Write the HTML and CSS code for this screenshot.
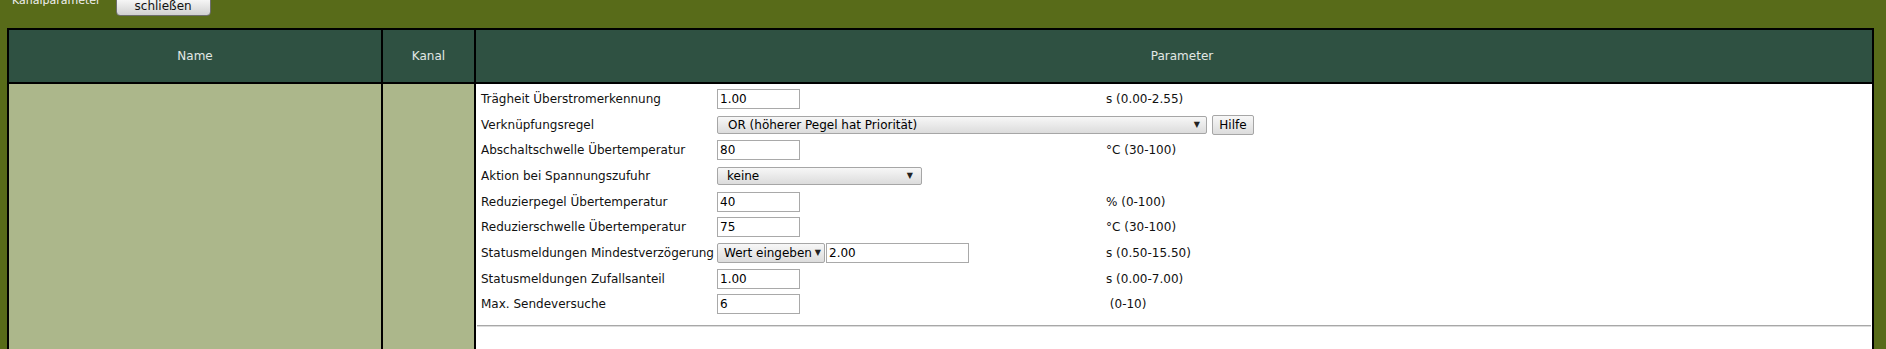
FILE: index.html
```html
<!DOCTYPE html>
<html lang="de">
<head>
<meta charset="utf-8">
<title>Kanalparameter</title>
<link rel="stylesheet" href="styles.css">
</head>
<body>
<div class="topbar">
  <span class="title">Kanalparameter</span>
  <button class="close-btn" type="button">schließen</button>
</div>
<table class="channel-table">
  <thead>
    <tr>
      <th class="col-name">Name</th>
      <th class="col-kanal">Kanal</th>
      <th class="col-param">Parameter</th>
    </tr>
  </thead>
  <tbody>
    <tr>
      <td class="cell-name"></td>
      <td class="cell-kanal"></td>
      <td class="cell-param">
        <div class="params">
          <div class="label">Trägheit Überstromerkennung</div>
          <div class="value"><input class="field" type="text" value="1.00"></div>
          <div class="unit">s (0.00-2.55)</div>

          <div class="label">Verknüpfungsregel</div>
          <div class="value wide">
            <div class="select select-rule"><span>OR (höherer Pegel hat Priorität)</span><span class="arrow">▼</span></div>
            <button class="help-btn" type="button">Hilfe</button>
          </div>

          <div class="label">Abschaltschwelle Übertemperatur</div>
          <div class="value"><input class="field" type="text" value="80"></div>
          <div class="unit">°C (30-100)</div>

          <div class="label">Aktion bei Spannungszufuhr</div>
          <div class="value wide">
            <div class="select select-action"><span>keine</span><span class="arrow">▼</span></div>
          </div>

          <div class="label">Reduzierpegel Übertemperatur</div>
          <div class="value"><input class="field" type="text" value="40"></div>
          <div class="unit">% (0-100)</div>

          <div class="label">Reduzierschwelle Übertemperatur</div>
          <div class="value"><input class="field" type="text" value="75"></div>
          <div class="unit">°C (30-100)</div>

          <div class="label">Statusmeldungen Mindestverzögerung</div>
          <div class="value">
            <div class="select select-mode"><span>Wert eingeben</span><span class="arrow">▼</span></div>
            <input class="field field-long" type="text" value="2.00">
          </div>
          <div class="unit">s (0.50-15.50)</div>

          <div class="label">Statusmeldungen Zufallsanteil</div>
          <div class="value"><input class="field" type="text" value="1.00"></div>
          <div class="unit">s (0.00-7.00)</div>

          <div class="label">Max. Sendeversuche</div>
          <div class="value"><input class="field" type="text" value="6"></div>
          <div class="unit">&nbsp;(0-10)</div>
        </div>
        <hr class="sep">
      </td>
    </tr>
  </tbody>
</table>
</body>
</html>
```
FILE: styles.css
```css
body {
  margin: 0;
  background: #586b19;
  font-family: "DejaVu Sans", Verdana, sans-serif;
  font-size: 12px;
  color: #111;
}

.topbar {
  display: flex;
  align-items: flex-start;
  height: 28px;
  padding-left: 12px;
}

.title {
  margin-top: -6px;
  font-size: 11px;
  line-height: 13px;
  color: #f0f0f0;
}

.close-btn {
  box-sizing: border-box;
  margin-left: 15px;
  margin-top: -4px;
  width: 95px;
  height: 20px;
  padding: 0;
  border: 1px solid #6e6e6e;
  border-radius: 4px;
  background: linear-gradient(#fdfdfd, #d0d0d0);
  font: 12px "DejaVu Sans", Verdana, sans-serif;
  color: #111;
}

.channel-table {
  box-sizing: border-box;
  margin-left: 7px;
  width: 1867px;
  border: 2px solid #000;
  border-spacing: 0;
  table-layout: fixed;
}

.channel-table th {
  height: 52px;
  padding: 0;
  background: #2f5142;
  color: #e2e8e5;
  font-weight: normal;
  font-size: 12px;
  border-bottom: 2px solid #000;
  vertical-align: middle;
}

.col-name {
  width: 372px;
  border-right: 2px solid #000;
}

.col-kanal {
  width: 91px;
  border-right: 2px solid #000;
}

.channel-table th.col-param {
  padding-left: 16px;
}

.channel-table td {
  padding: 0;
  vertical-align: top;
}

.cell-name,
.cell-kanal {
  background: #acb78b;
  border-right: 2px solid #000;
}

.cell-param {
  background: #fff;
}

.params {
  display: grid;
  grid-template-columns: 236px 389px 1fr;
  grid-auto-rows: 25.7px;
  align-items: center;
  padding: 2px 0 0 5px;
}

.label,
.unit {
  white-space: nowrap;
  color: #111;
}

.value {
  display: flex;
  align-items: center;
  gap: 1px;
}

.value.wide {
  grid-column: span 2;
  gap: 5px;
}

.field {
  box-sizing: border-box;
  width: 83px;
  height: 20px;
  margin: 0;
  padding: 0 2px;
  border: 1px solid #a9a9a9;
  background: #fff;
  font: 12px "DejaVu Sans", Verdana, sans-serif;
  color: #000;
}

.field-long {
  width: 143px;
}

.select {
  box-sizing: border-box;
  display: flex;
  align-items: center;
  justify-content: space-between;
  height: 18px;
  padding: 0 6px 0 10px;
  border: 1px solid #a6a6a6;
  border-radius: 2px;
  background: linear-gradient(#f7f7f7, #dcdcdc);
  color: #000;
  white-space: nowrap;
}

.select-rule {
  width: 490px;
}

.select-action {
  width: 205px;
  padding-left: 9px;
  padding-right: 8px;
}

.select-mode {
  width: 108px;
  height: 20px;
  padding: 0 3px 0 6px;
}

.arrow {
  font-size: 8px;
  color: #222;
}

.help-btn {
  box-sizing: border-box;
  width: 42px;
  height: 20px;
  margin: 0;
  padding: 0;
  border: 1px solid #a6a6a6;
  border-radius: 2px;
  background: linear-gradient(#f7f7f7, #dcdcdc);
  font: 12px "DejaVu Sans", Verdana, sans-serif;
  color: #000;
}

.sep {
  height: 0;
  margin: 8px 1px 40px;
  border: 0;
  border-top: 1px solid #a8a8a8;
  border-bottom: 1px solid #dcdcdc;
}
```
